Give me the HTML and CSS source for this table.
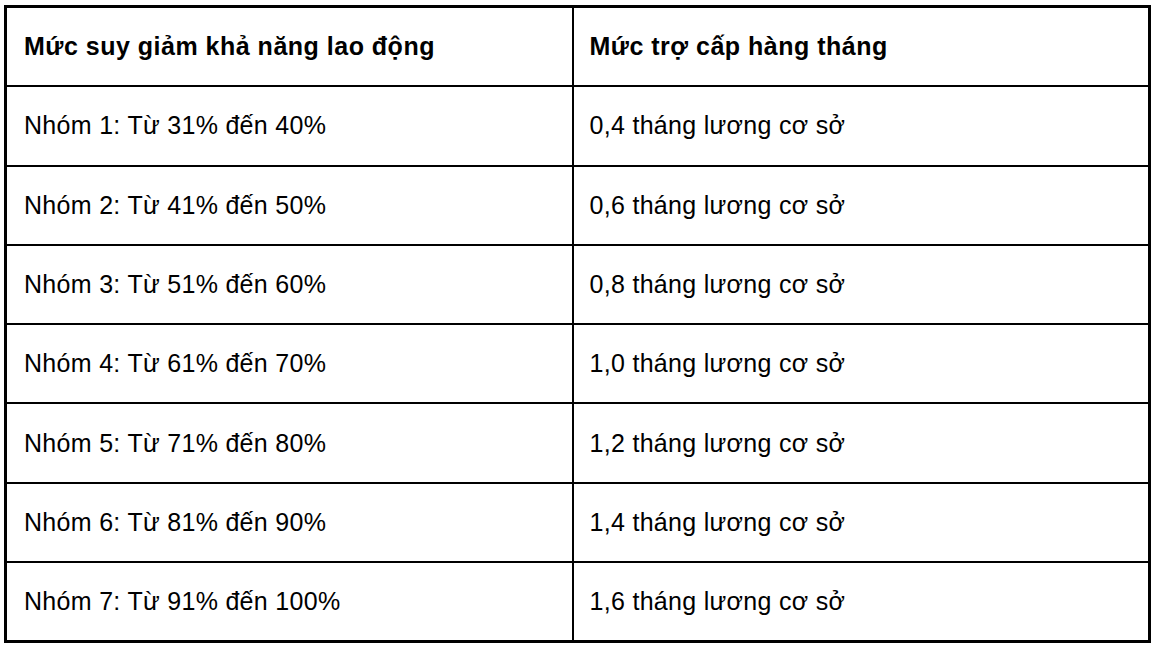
FILE: index.html
```html
<!DOCTYPE html>
<html lang="vi">
<head>
<meta charset="utf-8">
<title>Mức trợ cấp hàng tháng</title>
<link rel="stylesheet" href="styles.css">
</head>
<body>
<table class="allowance">
  <colgroup>
    <col class="col-level">
    <col class="col-amount">
  </colgroup>
  <thead>
    <tr>
      <th>Mức suy giảm khả năng lao động</th>
      <th>Mức trợ cấp hàng tháng</th>
    </tr>
  </thead>
  <tbody>
    <tr><td>Nhóm 1: Từ 31% đến 40%</td><td>0,4 tháng lương cơ sở</td></tr>
    <tr><td>Nhóm 2: Từ 41% đến 50%</td><td>0,6 tháng lương cơ sở</td></tr>
    <tr><td>Nhóm 3: Từ 51% đến 60%</td><td>0,8 tháng lương cơ sở</td></tr>
    <tr><td>Nhóm 4: Từ 61% đến 70%</td><td>1,0 tháng lương cơ sở</td></tr>
    <tr><td>Nhóm 5: Từ 71% đến 80%</td><td>1,2 tháng lương cơ sở</td></tr>
    <tr><td>Nhóm 6: Từ 81% đến 90%</td><td>1,4 tháng lương cơ sở</td></tr>
    <tr><td>Nhóm 7: Từ 91% đến 100%</td><td>1,6 tháng lương cơ sở</td></tr>
  </tbody>
</table>
</body>
</html>
```
FILE: styles.css
```css
html, body {
  margin: 0;
  background: #fff;
}
body {
  padding: 5px 4px;
  font-family: "Liberation Sans", Arial, sans-serif;
  color: #000;
}
.allowance {
  border-collapse: collapse;
  width: 1144px;
  table-layout: fixed;
  border: 3px solid #000;
}
.col-level { width: 567px; }
.col-amount { width: 577px; }
.allowance th,
.allowance td {
  border: 2px solid #000;
  height: 77.3px;
  padding: 0 0 0 17px;
  text-align: left;
  vertical-align: middle;
  font-size: 25px;
  letter-spacing: 0.3px;
  white-space: nowrap;
}
.allowance th {
  font-weight: bold;
  letter-spacing: 0.5px;
}
.allowance td + td,
.allowance th + th {
  padding-left: 16px;
}
```
